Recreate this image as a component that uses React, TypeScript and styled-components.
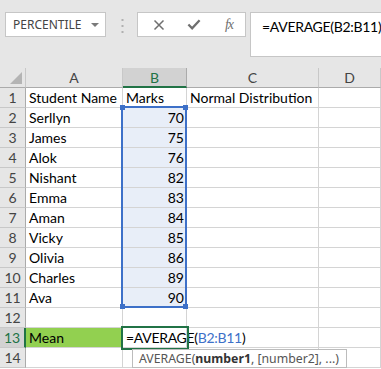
import styled, { createGlobalStyle } from 'styled-components';

const GlobalStyle = createGlobalStyle`
  html, body {
    margin: 0;
    padding: 0;
    background: #ffffff;
  }
`;

const CELL_FONT = `Lato, 'Liberation Sans', sans-serif`;
const UI_FONT = `'Noto Sans', 'Liberation Sans', sans-serif`;

const GREEN = '#217346';
const BLUE = '#3d70c8';
const GRID = '#d4d4d4';

const COLUMNS = '26px 97px 64px 132px 1fr';
const ROWS = 'repeat(15, 20px)';

const Window = styled.div`
  width: 381px;
  height: 369px;
  overflow: hidden;
  background: #e6e6e6;
  display: flex;
  flex-direction: column;
`;

const Toolbar = styled.div`
  height: 68px;
  flex: none;
  box-sizing: border-box;
  padding: 12px 0 0 5px;
  display: flex;
  align-items: flex-start;
`;

const NameBox = styled.div`
  flex: none;
  width: 101px;
  min-width: 0;
  height: 25px;
  box-sizing: border-box;
  overflow: hidden;
  background: #fff;
  border: 1px solid #c6c6c6;
  display: flex;
  align-items: center;
  padding: 0 6px 0 7px;
  font-family: ${UI_FONT};
  font-size: 12px;
  color: #444;
  white-space: nowrap;
`;

const DropArrow = styled.span`
  margin-left: auto;
  width: 0;
  height: 0;
  border-left: 4px solid transparent;
  border-right: 4px solid transparent;
  border-top: 4px solid #7a7a7a;
`;

const Grip = styled.svg`
  margin: 7px 0 0 15px;
  flex: none;
`;

const FxBox = styled.div`
  flex: none;
  margin-left: 13px;
  width: 109px;
  height: 25px;
  box-sizing: border-box;
  background: #fff;
  border: 1px solid #c6c6c6;
  display: flex;
  align-items: center;
  padding-left: 14px;
  gap: 21px;
`;

const FxButton = styled.span`
  width: 14px;
  height: 14px;
  display: flex;
  align-items: center;
  justify-content: center;
  color: #6f6f6f;
`;

const FxLabel = styled.span`
  font-family: 'Liberation Serif', serif;
  font-style: italic;
  font-size: 14px;
  color: #6f6f6f;
  letter-spacing: -1px;
`;

const FormulaBox = styled.div`
  margin-left: 4px;
  flex: 1;
  min-width: 0;
  overflow: hidden;
  height: 45px;
  box-sizing: border-box;
  background: #fff;
  border: 1px solid #c6c6c6;
  border-right: none;
  padding: 4px 0 0 11px;
  font-family: ${CELL_FONT};
  font-size: 14px;
  line-height: 20px;
  color: #000;
  white-space: nowrap;
`;

const FormulaText = styled.span`
  letter-spacing: -0.3px;
`;

const SheetWrap = styled.div`
  position: relative;
  flex: 1;
  background: #fff;
`;

const Sheet = styled.div`
  display: grid;
  grid-template-columns: ${COLUMNS};
  grid-template-rows: ${ROWS};
`;

const Corner = styled.div`
  background: #e6e6e6;
  border-right: 1px solid #c8c8c8;
  border-bottom: 1px solid #ababab;
  box-sizing: border-box;
  display: flex;
  align-items: flex-end;
  justify-content: flex-end;
  padding: 0 3px 3px 0;

  &::after {
    content: '';
    width: 12px;
    height: 12px;
    background: #b4b4b4;
    clip-path: polygon(100% 0, 100% 100%, 0 100%);
  }
`;

const ColHeader = styled.div<{ $active?: boolean }>`
  box-sizing: border-box;
  background: ${({ $active }) => ($active ? '#d2d2d2' : '#e6e6e6')};
  color: ${({ $active }) => ($active ? GREEN : '#444')};
  border-right: 1px solid ${({ $active }) => ($active ? '#ababab' : '#c8c8c8')};
  border-bottom: ${({ $active }) => ($active ? `2px solid ${GREEN}` : '1px solid #ababab')};
  font-family: ${CELL_FONT};
  font-size: 14px;
  line-height: 19px;
  text-align: center;
`;

const RowHeader = styled.div<{ $active?: boolean }>`
  box-sizing: border-box;
  background: ${({ $active }) => ($active ? '#d2d2d2' : '#e6e6e6')};
  color: ${({ $active }) => ($active ? GREEN : '#444')};
  border-right: ${({ $active }) => ($active ? `2px solid ${GREEN}` : '1px solid #ababab')};
  border-bottom: 1px solid #c8c8c8;
  font-family: ${CELL_FONT};
  font-size: 14px;
  line-height: 19px;
  text-align: center;
`;

const Cell = styled.div<{ $align?: 'left' | 'right'; $fill?: string }>`
  box-sizing: border-box;
  background: ${({ $fill }) => $fill ?? 'transparent'};
  border-right: 1px solid ${GRID};
  border-bottom: 1px solid ${GRID};
  padding: 0 2px 0 3px;
  font-family: ${CELL_FONT};
  font-size: 14px;
  line-height: 19px;
  color: #000;
  text-align: ${({ $align }) => $align ?? 'left'};
  white-space: nowrap;
  overflow: visible;
`;

const Ref = styled.span`
  color: ${BLUE};
`;

const Overlay = styled.div`
  position: absolute;
  inset: 0;
  display: grid;
  grid-template-columns: ${COLUMNS};
  grid-template-rows: ${ROWS};
  pointer-events: none;
`;

const RangeBox = styled.div`
  grid-column: 3;
  grid-row: 3 / 13;
  margin: -2px 0 0 -2px;
  border: 2px solid ${BLUE};
  position: relative;
`;

const Handle = styled.span<{ $v: 'top' | 'bottom'; $h: 'left' | 'right' }>`
  position: absolute;
  width: 5px;
  height: 5px;
  background: ${BLUE};
  ${({ $v }) => $v}: -3px;
  ${({ $h }) => $h}: -3px;
`;

const ActiveBox = styled.div`
  grid-column: 3;
  grid-row: 14;
  margin: -2px;
  border: 2px solid ${GREEN};
  position: relative;
`;

const Tooltip = styled.div`
  position: absolute;
  top: calc(100% + 1px);
  left: 9px;
  height: 19px;
  box-sizing: border-box;
  background: #fff;
  border: 1px solid #bcbcbc;
  padding: 0 7px 0 6px;
  font-family: ${UI_FONT};
  font-size: 12.3px;
  line-height: 17px;
  color: #555;
  white-space: nowrap;

  b {
    color: #333;
    font-weight: 700;
  }
`;

const students = [
  ['Serllyn', 70],
  ['James', 75],
  ['Alok', 76],
  ['Nishant', 82],
  ['Emma', 83],
  ['Aman', 84],
  ['Vicky', 85],
  ['Olivia', 86],
  ['Charles', 89],
  ['Ava', 90],
] as const;

const RANGE_FILL = '#e8eef8';

export default function App() {
  return (
    <Window>
      <GlobalStyle />
      <Toolbar>
        <NameBox>
          PERCENTILE
          <DropArrow />
        </NameBox>
        <Grip width="3" height="14" viewBox="0 0 3 14">
          <rect x="0.5" y="0" width="2" height="2" fill="#b0b0b0" />
          <rect x="0.5" y="6" width="2" height="2" fill="#b0b0b0" />
          <rect x="0.5" y="12" width="2" height="2" fill="#b0b0b0" />
        </Grip>
        <FxBox>
          <FxButton>
            <svg width="12" height="12" viewBox="0 0 12 12">
              <path d="M1.5 1.5 L10.5 10.5 M10.5 1.5 L1.5 10.5" stroke="currentColor" strokeWidth="1.5" />
            </svg>
          </FxButton>
          <FxButton>
            <svg width="15" height="13" viewBox="0 0 15 13">
              <path d="M1.5 6.5 L5.5 10.5 L13.5 2" stroke="currentColor" strokeWidth="2.5" fill="none" />
            </svg>
          </FxButton>
          <FxButton>
            <FxLabel>fx</FxLabel>
          </FxButton>
        </FxBox>
        <FormulaBox>
          <FormulaText>=AVERAGE(B2:B11)</FormulaText>
        </FormulaBox>
      </Toolbar>
      <SheetWrap>
        <Sheet>
          <Corner />
          <ColHeader>A</ColHeader>
          <ColHeader $active>B</ColHeader>
          <ColHeader>C</ColHeader>
          <ColHeader>D</ColHeader>

          <RowHeader>1</RowHeader>
          <Cell>Student Name</Cell>
          <Cell>Marks</Cell>
          <Cell>Normal Distribution</Cell>
          <Cell />

          {students.map(([name, mark], i) => (
            <Row key={name} n={i + 2} name={name} mark={mark} />
          ))}

          <RowHeader>12</RowHeader>
          <Cell />
          <Cell />
          <Cell />
          <Cell />

          <RowHeader $active>13</RowHeader>
          <Cell $fill="#92d050">Mean</Cell>
          <Cell>
            <FormulaText>
              =AVERAGE(<Ref>B2:B11</Ref>)
            </FormulaText>
          </Cell>
          <Cell />
          <Cell />

          <RowHeader>14</RowHeader>
          <Cell />
          <Cell />
          <Cell />
          <Cell />
        </Sheet>
        <Overlay>
          <RangeBox>
            <Handle $v="top" $h="left" />
            <Handle $v="top" $h="right" />
            <Handle $v="bottom" $h="left" />
            <Handle $v="bottom" $h="right" />
          </RangeBox>
          <ActiveBox>
            <Tooltip>
              AVERAGE(<b>number1</b>, [number2], ...)
            </Tooltip>
          </ActiveBox>
        </Overlay>
      </SheetWrap>
    </Window>
  );
}

function Row({ n, name, mark }: { n: number; name: string; mark: number }) {
  return (
    <>
      <RowHeader>{n}</RowHeader>
      <Cell>{name}</Cell>
      <Cell $align="right" $fill={RANGE_FILL}>
        {mark}
      </Cell>
      <Cell />
      <Cell />
    </>
  );
}
